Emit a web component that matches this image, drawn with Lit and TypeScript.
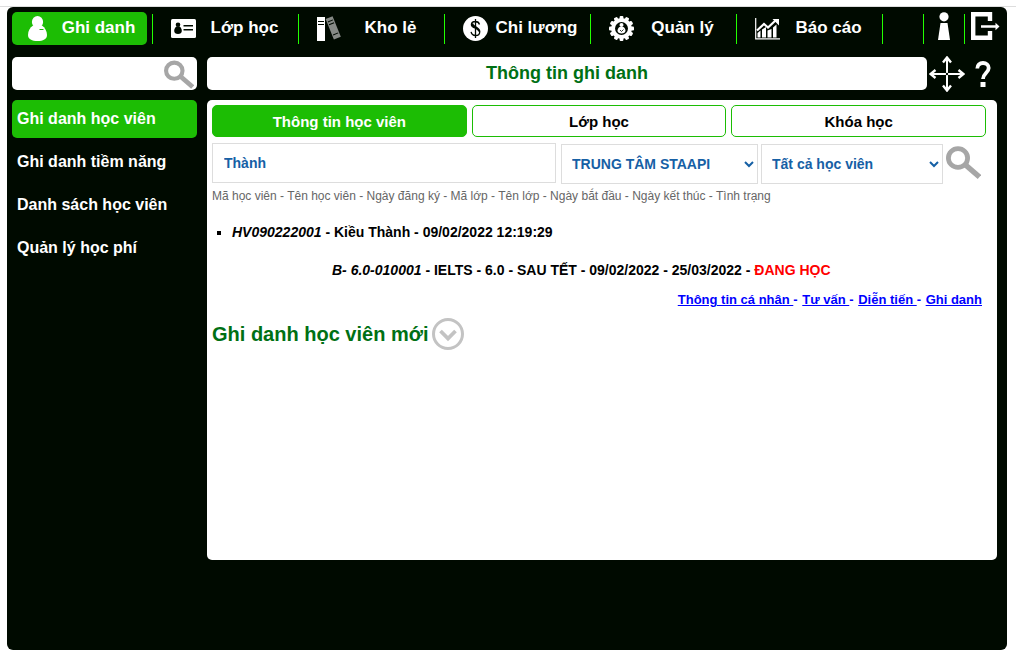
import { LitElement, html, svg, css } from "lit";
import { customElement, state } from "lit/decorators.js";

const teeth = Array.from({ length: 12 }, (_, i) => i * 30);

const icons = {
  person: svg`<svg class="icon" viewBox="0 0 25 25" aria-hidden="true"><ellipse cx="12.500" cy="6" rx="5.600" ry="6"/><path d="M8 9.500h9c3 2 5 6 5 9.500 0 4-4 6-9.500 6S3 23 3 19c0-4 2-7.500 5-9.500z"/><path d="M14.500 13.500h4" stroke="#1cbd04" stroke-width="1"/></svg>`,
  card: svg`<svg class="icon" viewBox="0 0 25 25" aria-hidden="true"><rect x="0" y="3" width="25" height="19" rx="1.500"/><g fill="#000a00"><circle cx="7" cy="8.700" r="2.300"/><path d="M5.500 10.500h3c1.500 1 2.300 2.500 2.300 4.500 0 2-1.500 3-3.800 3s-3.800-1-3.800-3c0-2 .8-3.500 2.300-4.500z"/><rect x="12.500" y="9" width="9.500" height="1.500"/><rect x="12.500" y="13" width="9.500" height="1.500"/></g></svg>`,
  books: svg`<svg class="icon" viewBox="0 0 25 25" aria-hidden="true"><rect x="0" y="1" width="8" height="24"/><path d="M1 5.500h6M1 8.500h6" stroke="#000a00"/><g transform="rotate(-22 9 4)"><rect x="9" y="3" width="7.500" height="22" fill="#868a86"/><path d="M10 6.500h5.500M10 9.500h5.500M10 20.500h5.500" stroke="#000a00"/></g></svg>`,
  money: svg`<svg class="icon" viewBox="0 0 25 25" aria-hidden="true"><circle cx="12.500" cy="12.500" r="12.500"/><path d="M16.500 8.500c-.5-2-2-3-4.200-3-2.300 0-3.900 1.200-3.900 3.200 0 4.300 8.300 2.800 8.300 7.200 0 2.200-1.700 3.600-4.200 3.600-2.400 0-4-1.200-4.400-3.600M12.500 3v19" fill="none" stroke="#000a00" stroke-width="1.300"/><path d="M9 7.500c.5 4 7 3.500 7.300 8" fill="none" stroke="#000a00" stroke-width="2.200"/></svg>`,
  gear: svg`<svg class="icon" viewBox="0 0 25 25" aria-hidden="true">${teeth.map(
    (a) => svg`<rect x="10.600" y="0" width="3.800" height="5" rx="1" transform="rotate(${a} 12.500 12.500)"/>`
  )}<circle cx="12.500" cy="12.500" r="10.500"/><circle cx="12.500" cy="12.500" r="6.500" fill="#000a00"/><circle cx="12.500" cy="9" r="2"/><path d="M10.500 11h4c1.300 1 2 2.300 2 3.800 0 1.600-1.600 2.700-4 2.700s-4-1.100-4-2.700c0-1.500.7-2.800 2-3.800z"/><path d="M11 14l1.500 1.500 2-2" fill="none" stroke="#000a00" stroke-width=".8"/></svg>`,
  chart: svg`<svg class="icon" viewBox="0 0 25 25" aria-hidden="true"><path d="M.7 2v20.800H25" fill="none" stroke="#fff" stroke-width="1.200"/><path d="M2.500 17l3-2.500v7H2.500zM7 13.500l4-2.500v10.500H7zM12.500 14.500l4-1.500v8.500h-4zM18 11.500l3.500-3v13h-3.500z"/><path d="M2 14.500l7-6.500 4 3.500 8-7.500" fill="none" stroke="#fff" stroke-width="2.200"/><path d="M17.500 3h6.500v6.500z"/></svg>`,
  info: svg`<svg class="info-icon" viewBox="0 0 14 28" aria-hidden="true"><circle cx="7" cy="4.800" r="4.600"/><path d="M3.500 11h7L13 28H1z"/></svg>`,
  exit: svg`<svg class="exit-icon" viewBox="0 0 29 28" aria-hidden="true"><path d="M19 9V2.200H2.200v23.600H19V19" fill="none" stroke="#fff" stroke-width="4.400"/><path d="M10 13.300h14.500V10.800l4 3.700-4 3.700v-2.500H10z"/></svg>`,
  move: svg`<svg class="move-icon" viewBox="0 0 36 36" aria-hidden="true"><g fill="none" stroke="#fff" stroke-width="2"><path d="M18 1v34M1 18h34"/><path d="M14 6.500L18 1.500l4 5M14 29.500l4 5 4-5M6.500 14l-5 4 5 4M29.500 14l5 4-5 4" stroke-width="2.400"/></g><circle cx="18" cy="18" r="1.200" fill="#000a00"/></svg>`,
  help: svg`<svg class="help-icon" viewBox="0 0 16 26" aria-hidden="true"><path d="M2.300 7.500C2.300 4 4.700 2 8 2s5.700 2 5.700 5c0 4.700-5.700 5.500-5.700 11" fill="none" stroke="#fff" stroke-width="3.800"/><rect x="5.500" y="21" width="5" height="5"/></svg>`,
  search: svg`<svg class="search-icon" viewBox="0 0 35 34" aria-hidden="true"><g fill="none" stroke="#a6a6a6"><ellipse cx="12" cy="12" rx="9.600" ry="9.400" stroke-width="4.800"/><path d="M19 18.500l14.500 12.500" stroke-width="5.500"/></g></svg>`,
  expand: svg`<svg class="expand-icon" viewBox="0 0 32 32" aria-hidden="true"><g fill="none" stroke="#c3c3c3"><circle cx="16" cy="16" r="14.500" stroke-width="3"/><path d="M8.500 13l7.500 7.500 7.500-7.500" stroke-width="3.800"/></g></svg>`,
};

@customElement("app-root")
export class AppRoot extends LitElement {
  @state() private nav = 0;
  @state() private menu = 0;
  @state() private tab = 0;

  private navItems = [
    { label: "Ghi danh", icon: icons.person },
    { label: "Lớp học", icon: icons.card },
    { label: "Kho lẻ", icon: icons.books },
    { label: "Chi lương", icon: icons.money },
    { label: "Quản lý", icon: icons.gear },
    { label: "Báo cáo", icon: icons.chart },
  ];
  private menuItems = ["Ghi danh học viên", "Ghi danh tiềm năng", "Danh sách học viên", "Quản lý học phí"];
  private tabs = ["Thông tin học viên", "Lớp học", "Khóa học"];

  static styles = css`
    :host {
      display: block;
      font-family: "Liberation Sans", Arial, sans-serif;
      padding: 6px 9px 4px 7px;
      background: linear-gradient(#dddddd, #dddddd) 0 6px / 100% 1px no-repeat #ffffff;
    }
    * { box-sizing: border-box; }
    button { font: inherit; border: 0; padding: 0; background: none; cursor: pointer; color: inherit; }
    svg { display: block; fill: #ffffff; flex: none; }
    .shell {
      min-height: calc(100vh - 11px);
      margin-top: 1px;
      padding: 5px;
      border-radius: 6px;
      background: #000a00;
    }
    .topbar { display: flex; height: 33px; color: #ffffff; }
    .nav { display: flex; flex: 1; }
    .nav-cell { display: flex; width: 146px; }
    .nav-button {
      display: flex;
      align-items: center;
      width: 135px;
      padding-left: 13px;
      border-radius: 5px;
      font-size: 17px;
      font-weight: bold;
      line-height: 20px;
    }
    .nav-button.active { background: #1cbd04; }
    .nav-label { flex: 1; padding-bottom: 2px; text-align: center; white-space: nowrap; }
    .icon { width: 25px; height: 25px; }
    .rule { width: 1px; height: 30px; margin-top: 2px; background: #22ff00; flex: none; }
    .nav .rule { margin-left: 5px; }
    .tools { display: flex; }
    .tools button { display: flex; align-items: flex-start; justify-content: center; width: 40px; }
    .tools .exit { width: 37px; padding-left: 6px; justify-content: flex-start; }
    .info-icon { width: 14px; height: 28px; }
    .exit-icon { width: 29px; height: 28px; }
    .body {
      display: grid;
      grid-template-columns: 185px minmax(0, 1fr);
      gap: 10px;
      margin-top: 12px;
      padding-right: 5px;
    }
    .quick { position: relative; }
    .quick-input { display: block; width: 100%; height: 33px; border: 0; border-radius: 5px; padding: 0 40px 0 10px; font: bold 14px "Liberation Sans", Arial, sans-serif; background: #ffffff; }
    .quick-button { position: absolute; top: 3px; right: 3px; }
    .quick .search-icon { width: 30px; height: 30px; }
    .heading { display: flex; align-items: center; height: 33px; }
    .title {
      flex: 1;
      margin: 0;
      height: 33px;
      border-radius: 5px;
      background: #ffffff;
      color: #007014;
      font-size: 18px;
      line-height: 32px;
      text-align: center;
    }
    .heading-tools { display: flex; align-items: center; gap: 10px; width: 70px; padding-left: 2px; }
    .move-icon { width: 36px; height: 36px; }
    .help-icon { width: 16px; height: 26px; }
    .menu { display: flex; flex-direction: column; gap: 5px; }
    .menu-link {
      height: 38px;
      padding-left: 5px;
      border-radius: 5px;
      color: #ffffff;
      font-size: 16px;
      font-weight: bold;
      line-height: 38px;
      text-decoration: none;
    }
    .menu-link.active { background: #1cbd04; }
    .panel { min-height: 460px; padding: 5px 11px 5px 5px; border-radius: 5px; background: #ffffff; }
    .tabs { display: grid; grid-template-columns: repeat(3, 1fr); gap: 5px; }
    .tab { height: 32px; border: 1px solid #1cbd04; border-radius: 5px; font-size: 15px; font-weight: bold; color: #000000; }
    .tab.active { background: #1cbd04; color: #ffffff; }
    .filters { display: flex; align-items: flex-start; margin-top: 6px; margin-right: 5px; }
    .field {
      height: 40px;
      border: 1px solid #dddddd;
      border-radius: 0;
      background: #ffffff;
      color: #1660a5;
      font: bold 14px "Liberation Sans", Arial, sans-serif;
    }
    .keyword { flex: 1; min-width: 0; padding: 0 11px; }
    .center { width: 197px; margin: 1px 3px 0 5px; padding: 0 0 0 6px; }
    .scope { width: 182px; margin: 1px 3px 0 0; padding: 0 0 0 6px; }
    .filters .search-icon { width: 35px; height: 34px; margin-top: 3px; }
    .hint { margin: 3px 0 0; color: #666666; font-size: 12px; line-height: 18px; }
    .results { margin: 17px 0 0; padding: 0 0 0 20px; list-style: square; font-size: 14px; font-weight: bold; line-height: 20px; }
    .course { margin: 18px 0 0; padding-left: 100px; }
    .status { color: #ff0000; }
    .links { margin: 11px 4px 0 0; font-size: 13px; line-height: 18px; text-align: right; color: #0000ff; }
    .links a { color: #0000ff; white-space: pre; }
    .links a + a { margin-left: 1px; }
    .create { display: flex; align-items: center; gap: 4px; margin-top: 9px; }
    .create h2 { margin: 0; color: #007014; font-size: 20px; line-height: 24px; }
    .expand-icon { width: 32px; height: 32px; }
  `;

  render() {
    return html`
      <div class="shell">
        <header class="topbar">
          <nav class="nav">
            ${this.navItems.map(
              (item, i) => html`<div class="nav-cell">
                <button class="nav-button ${i === this.nav ? "active" : ""}" @click=${() => (this.nav = i)}>
                  ${item.icon}<span class="nav-label">${item.label}</span>
                </button>
                <span class="rule"></span>
              </div>`
            )}
          </nav>
          <div class="tools">
            <span class="rule"></span>
            <button aria-label="Thông tin">${icons.info}</button>
            <span class="rule"></span>
            <button class="exit" aria-label="Thoát">${icons.exit}</button>
          </div>
        </header>
        <div class="body">
          <div class="quick">
            <input class="quick-input" type="text" aria-label="Tìm nhanh" />
            <button class="quick-button" aria-label="Tìm">${icons.search}</button>
          </div>
          <div class="heading">
            <h1 class="title">Thông tin ghi danh</h1>
            <div class="heading-tools">
              <button aria-label="Di chuyển">${icons.move}</button>
              <button aria-label="Trợ giúp">${icons.help}</button>
            </div>
          </div>
          <nav class="menu">
            ${this.menuItems.map(
              (label, i) => html`<a href="#" class="menu-link ${i === this.menu ? "active" : ""}" @click=${() => (this.menu = i)}>${label}</a>`
            )}
          </nav>
          <main class="panel">
            <div class="tabs">
              ${this.tabs.map(
                (label, i) => html`<button class="tab ${i === this.tab ? "active" : ""}" @click=${() => (this.tab = i)}>${label}</button>`
              )}
            </div>
            <div class="filters">
              <input class="field keyword" type="text" aria-label="Từ khóa" .value=${"Thành"} />
              <select class="field center" aria-label="Trung tâm"><option>TRUNG TÂM STAAPI</option></select>
              <select class="field scope" aria-label="Học viên"><option>Tất cả học viên</option></select>
              <button aria-label="Tìm kiếm">${icons.search}</button>
            </div>
            <p class="hint">Mã học viên - Tên học viên - Ngày đăng ký - Mã lớp - Tên lớp - Ngày bắt đầu - Ngày kết thúc - Tình trạng</p>
            <ul class="results">
              <li>
                <em>HV090222001</em> - Kiều Thành - 09/02/2022 12:19:29
                <p class="course"><em>B- 6.0-010001</em> - IELTS - 6.0 - SAU TẾT - 09/02/2022 - 25/03/2022 - <span class="status">ĐANG HỌC</span></p>
                <p class="links"><a href="#">Thông tin cá nhân </a>- <a href="#">Tư vấn </a>- <a href="#">Diễn tiến </a>- <a href="#">Ghi danh</a></p>
              </li>
            </ul>
            <div class="create">
              <h2>Ghi danh học viên mới</h2>
              <button aria-label="Mở rộng">${icons.expand}</button>
            </div>
          </main>
        </div>
      </div>
    `;
  }
}
